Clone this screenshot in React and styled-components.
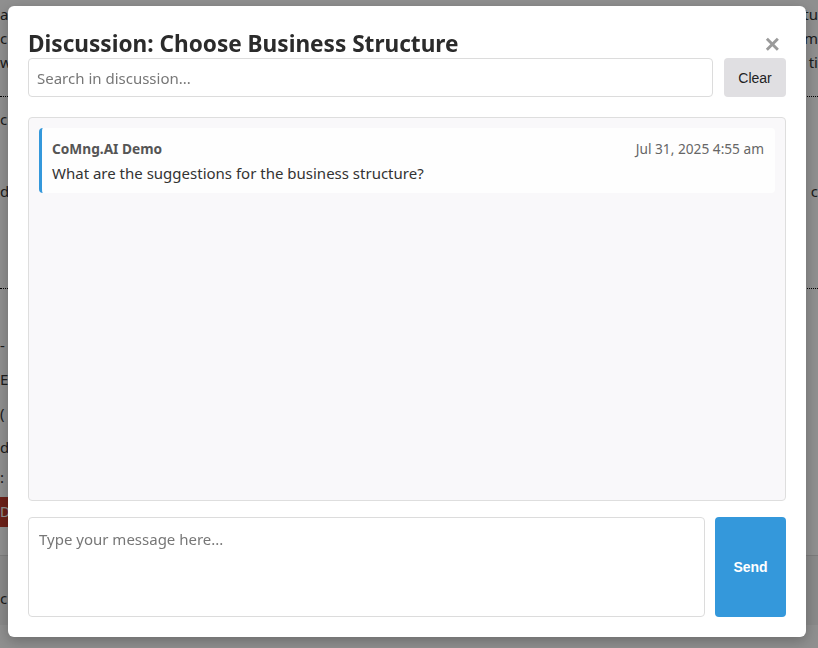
import styled, { createGlobalStyle } from "styled-components";

const GlobalStyle = createGlobalStyle`
  * { box-sizing: border-box; }
  html, body { margin: 0; padding: 0; }
  body {
    background: #fff;
    font-family: "Noto Sans", "Liberation Sans", sans-serif;
    color: #333;
    overflow: hidden;
  }
`;

// page behind the dialog
const Page = styled.div`
  width: 818px;
  height: 648px;
  font-size: 15px;
  line-height: 24px;
`;

const TextLine = styled.div`
  display: flex;
  justify-content: space-between;
  white-space: nowrap;
  padding-top: ${(p) => p.$top || 0}px;
`;

const Divider = styled.div`
  border-top: 1px dotted #000;
  margin-top: ${(p) => p.$top || 0}px;
`;

const RedButton = styled.div`
  width: 60px;
  height: 30px;
  margin-top: 8px;
  margin-left: -28px;
  background: #c0392b;
  color: #fff;
  font-size: 14px;
  line-height: 30px;
  padding-left: 28px;
`;

const Band = styled.div`
  margin-top: 28px;
  border-top: 1px solid #ddd;
  background: #f4f4f4;
  height: 70px;
  padding-top: 30px;
`;

const Overlay = styled.div`
  position: fixed;
  inset: 0;
  background: rgba(0, 0, 0, 0.44);
`;

const Modal = styled.div`
  margin: 6px 0 0 8px;
  width: 798px;
  height: 631px;
  background: #fff;
  border-radius: 6px;
  box-shadow: 0 4px 14px rgba(0, 0, 0, 0.25);
  padding: 20px;
  display: flex;
  flex-direction: column;
`;

const Header = styled.div`
  display: flex;
  justify-content: space-between;
  align-items: center;
  height: 32px;
`;

const Title = styled.h2`
  margin: 0;
  padding-top: 4px;
  font-size: 22.6px;
  font-weight: 700;
  color: #2b2b2b;
  line-height: 28px;
`;

const Close = styled.button`
  border: none;
  background: none;
  padding: 0 6px 0 0;
  margin-top: 4px;
  font-family: "Liberation Sans", Arial, sans-serif;
  font-size: 26px;
  font-weight: 700;
  color: #9a9a9a;
  line-height: 1;
  cursor: pointer;
`;

const SearchRow = styled.div`
  display: flex;
  gap: 11px;
`;

const SearchInput = styled.input`
  flex: 1;
  height: 39px;
  border: 1px solid #dcdcdc;
  border-radius: 4px;
  padding: 0 8px;
  font-family: "Noto Sans", sans-serif;
  font-size: 15px;
  color: #333;
  outline: none;
  &::placeholder { color: #777; }
`;

const GrayButton = styled.button`
  width: 62px;
  height: 39px;
  border: none;
  border-radius: 4px;
  background: #e0dfe2;
  color: #222;
  font-family: "Liberation Sans", Arial, sans-serif;
  font-size: 14px;
  cursor: pointer;
`;

const Messages = styled.div`
  margin-top: 20px;
  height: 384px;
  background: #f9f8fa;
  border: 1px solid #dedede;
  border-radius: 4px;
  padding: 10px;
`;

const Message = styled.div`
  background: #fefefe;
  border-left: 3px solid #3498db;
  border-radius: 4px;
  padding: 12px 11px 10px 10px;
`;

const MessageHead = styled.div`
  display: flex;
  justify-content: space-between;
  align-items: center;
  font-size: 13.7px;
  line-height: 18px;
  margin-bottom: 5px;
`;

const Author = styled.span`
  font-weight: 700;
  color: #555;
`;

const Time = styled.span`
  color: #666;
`;

const MessageText = styled.div`
  font-size: 15px;
  line-height: 20px;
  color: #333;
`;

const Composer = styled.div`
  margin-top: 16px;
  display: flex;
  gap: 10px;
`;

const TextArea = styled.textarea`
  flex: 1;
  height: 100px;
  resize: none;
  border: 1px solid #dcdcdc;
  border-radius: 4px;
  padding: 10px;
  font-family: "Noto Sans", sans-serif;
  font-size: 15px;
  line-height: 22px;
  color: #333;
  outline: none;
  &::placeholder { color: #777; }
`;

const SendButton = styled.button`
  width: 71px;
  height: 100px;
  border: none;
  border-radius: 4px;
  background: #3498db;
  color: #fff;
  font-family: "Liberation Sans", Arial, sans-serif;
  font-size: 14px;
  font-weight: 600;
  cursor: pointer;
`;

export default function App() {
  return (
    <>
      <GlobalStyle />
      <Page>
        <TextLine $top={2}><span>a</span><span>tu</span></TextLine>
        <TextLine><span>c</span><span>m</span></TextLine>
        <TextLine><span>w</span><span>ti</span></TextLine>
        <Divider $top={22} />
        <TextLine $top={10}><span>ci</span><span /></TextLine>
        <TextLine $top={48}><span>d</span><span>c</span></TextLine>
        <Divider $top={85} />
        <TextLine $top={44}><span>-</span><span /></TextLine>
        <TextLine $top={10}><span>E</span><span /></TextLine>
        <TextLine $top={10}><span>(</span><span /></TextLine>
        <TextLine $top={10}><span>d</span><span /></TextLine>
        <TextLine $top={6}><span>:</span><span /></TextLine>
        <RedButton>De</RedButton>
        <Band>c</Band>
      </Page>
      <Overlay>
        <Modal>
          <Header>
            <Title>Discussion: Choose Business Structure</Title>
            <Close aria-label="Close">×</Close>
          </Header>
          <SearchRow>
            <SearchInput placeholder="Search in discussion..." />
            <GrayButton>Clear</GrayButton>
          </SearchRow>
          <Messages>
            <Message>
              <MessageHead>
                <Author>CoMng.AI Demo</Author>
                <Time>Jul 31, 2025 4:55 am</Time>
              </MessageHead>
              <MessageText>What are the suggestions for the business structure?</MessageText>
            </Message>
          </Messages>
          <Composer>
            <TextArea placeholder="Type your message here..." />
            <SendButton>Send</SendButton>
          </Composer>
        </Modal>
      </Overlay>
    </>
  );
}
